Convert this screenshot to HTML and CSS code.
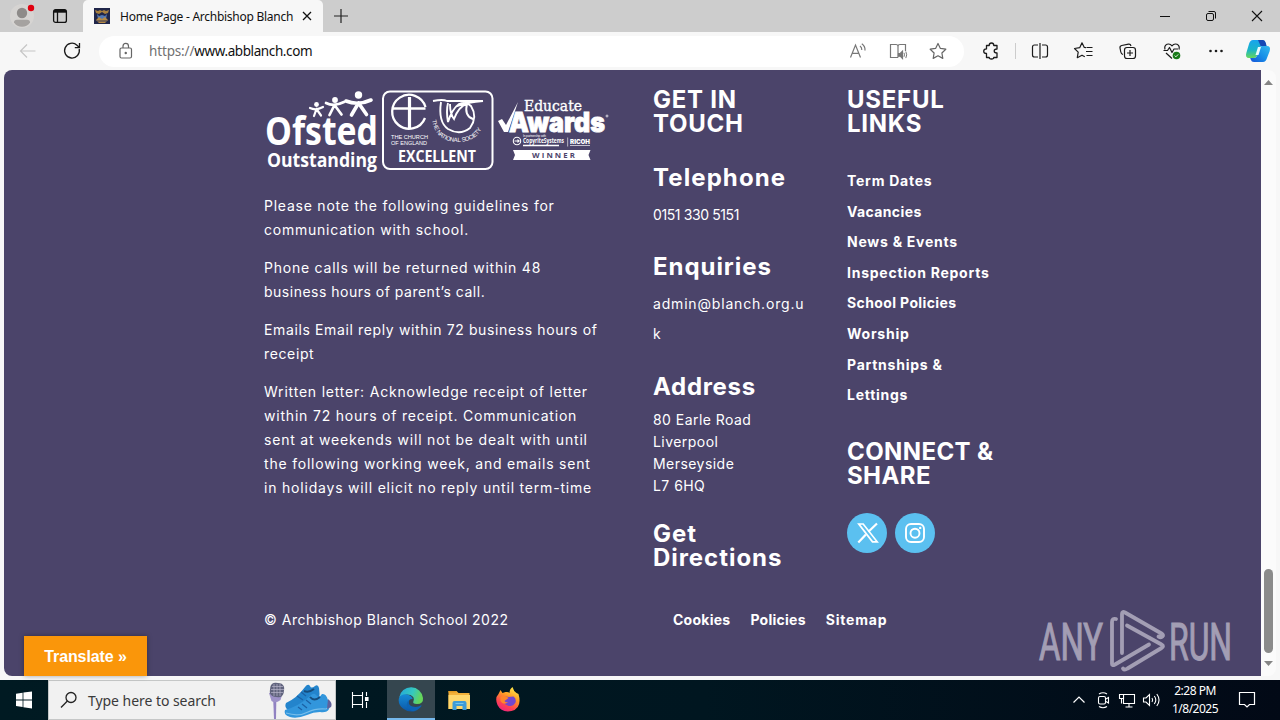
FILE: index.html
```html
<!DOCTYPE html>
<html lang="en">
<head>
<meta charset="utf-8">
<title>Home Page - Archbishop Blanch</title>
<link rel="stylesheet" href="styles.css">
</head>
<body>
<div class="desktop">
  <header class="tabbar">
    <svg class="profile" width="32" height="32" viewBox="0 0 32 32"><circle cx="16" cy="16" r="12" fill="#d6d4d2"/><circle cx="16" cy="13" r="5.2" fill="#8e8b89"/><path d="M8 22.500q0-2.800 3-2.800h10q3 0 3 2.800-3 4.300-8 4.300t-8-4.300" fill="#a5a2a0"/><circle cx="25" cy="8" r="3.200" fill="#e0000f"/></svg>
    <svg class="tabmenu" width="16" height="16" viewBox="0 0 16 16" fill="none" stroke="#111" stroke-width="1.300"><rect x="1.600" y="1.600" width="12.800" height="12.800" rx="2"/><path d="M2 3.300h12" stroke-width="2.800"/><path d="M5.500 4v10"/></svg>
    <div class="tab">
      <svg width="16" height="16" viewBox="0 0 16 16"><path fill="#20264a" d="M0 0h16v16H0z"/><path d="M1 2l3 1 2-1 2 1 2-1 2 1 3-1-1 3-3 1-3-2-3 2-3-1z" fill="#a8803f"/><path d="M3 6l2 2 3-1 3 1 2-2-1 5-4 2-4-2z" fill="#5379b5"/><path d="M2 12l3-3 3 2 3-2 3 3-3 3H5z" fill="#b58a45"/><path d="M3 13h10" stroke="#32375b"/></svg>
      <span class="tab-title">Home Page - Archbishop Blanch</span>
      <svg class="tab-close" width="10" height="10" viewBox="0 0 10 10" stroke="#111" stroke-width="1.300"><path d="M1 1l8 8M9 1L1 9"/></svg>
    </div>
    <svg class="newtab" width="14" height="14" viewBox="0 0 14 14" stroke="#222" stroke-width="1.200"><path d="M7 0v14M0 7h14"/></svg>
    <div class="winbtns">
      <svg width="46" height="32" viewBox="0 0 46 32" stroke="#111"><path d="M18 16.500h10"/></svg>
      <svg width="46" height="32" viewBox="0 0 46 32" stroke="#111" fill="none"><rect x="18.500" y="13.500" width="7" height="7" rx="1.500"/><path d="M20.500 11.500h5.500q1.500 0 1.500 1.500v5.500"/></svg>
      <svg width="46" height="32" viewBox="0 0 46 32" stroke="#111" stroke-width="1.100"><path d="M18 11l10 10M28 11L18 21"/></svg>
    </div>
  </header>

  <div class="toolbar">
    <svg class="slot" viewBox="0 0 44 38" fill="none" stroke="#c6c6c6" stroke-width="1.200"><path d="M29.500 19H15M21 12.500L14.500 19l6.500 6.500"/></svg>
    <svg class="slot" viewBox="0 0 44 38" fill="none" stroke="#1b1b1b" stroke-width="1.300"><path d="M29.200 17a7.400 7.400 0 1 1-2.200-3.800l2.400 2.300M29.500 11v4.700h-4.700"/></svg>
    <div class="omnibox">
      <svg class="lock" width="14" height="18" viewBox="0 0 14 18" fill="none" stroke="#666" stroke-width="1.200"><rect x="1" y="6" width="11.500" height="10" rx="1.500"/><path d="M4 6V4.200q0-2.800 2.750-2.800T9.500 4.200V6"/><circle cx="6.750" cy="11" r=".6" fill="#666"/></svg>
      <span class="url"><span class="scheme">https://</span>www.abblanch.com</span>
      <div class="omni-icons">
        <svg width="40" height="30" viewBox="0 0 40 30" fill="none" stroke="#777" stroke-width="1.200"><path d="M12.500 21.500L17.500 9l5 12.500M14.200 17.300h6.600M22 10q2 1.500 1.800 4M23.800 7.800q3.500 2.400 3.200 6.700"/></svg>
        <svg width="40" height="30" viewBox="0 0 40 30" fill="none" stroke="#777" stroke-width="1.200"><path d="M20 21.500h-7.500v-13H18q2 0 2 2v11M20 10.500q0-2 2-2h5.500v6.500"/><path d="M20.500 17.500h1.700l2.300-2.300v7.300l-2.300-2.300h-1.700z" fill="#777"/><path d="M26 16.800q1 2 0 4M27.800 15.500q1.800 3.300 0 6.600" stroke-width="1"/></svg>
        <svg width="40" height="30" viewBox="0 0 40 30" fill="none" stroke="#666" stroke-width="1.200" stroke-linejoin="round"><path d="M20 7.500l2.400 4.900 5.400.8-3.900 3.800.9 5.400-4.800-2.600-4.800 2.600.9-5.400-3.900-3.800 5.400-.8z"/></svg>
      </div>
    </div>
    <svg class="slot ext" viewBox="0 0 44 38" fill="none" stroke="#1b1b1b" stroke-width="1.300" stroke-linejoin="round"><path d="M17.500 13.500h2.700q0-2.500 2.300-2.500t2.300 2.500h3.200V17q-2.800 0-2.800 2t2.800 2v4.500h-3.200q0 1.500-2.300 1.500t-2.300-1.500h-2.700V21.500q-2.800 0-2.800-2.300t2.800-2.300z"/></svg>
    <span class="sep"></span>
    <svg class="slot" viewBox="0 0 44 38" fill="none" stroke="#1b1b1b" stroke-width="1.200"><path d="M20 13h-3.500q-2 0-2 2v8q0 2 2 2H20M24 13h3.500q2 0 2 2v8q0 2-2 2H24M22 11v16"/></svg>
    <svg class="slot" viewBox="0 0 44 38" fill="none" stroke="#1b1b1b" stroke-width="1.200" stroke-linejoin="round"><path d="M24 15.700l-1.700-.3-2.300-4.600-2.300 4.900-5.200.8 3.700 3.600-.9 5.600 4.700-2.500 2.800 1.500M24.500 15.500h6M24 19.500h6.500M24.500 23.500h6"/></svg>
    <svg class="slot" viewBox="0 0 44 38" fill="none" stroke="#1b1b1b" stroke-width="1.200"><rect x="18.500" y="15.500" width="11" height="11" rx="2.500"/><path d="M24 18v6M21 21h6M17 22.500q-1.800-.5-2.200-2.500l-.8-4q-.3-2 1.700-2.500l6.800-1.300q2-.3 2.500 1.800"/></svg>
    <svg class="slot" viewBox="0 0 44 38" fill="none" stroke="#1b1b1b" stroke-width="1.200" stroke-linejoin="round"><path d="M15 17.500q-1-4 2-5.200 3-1 5 1.500 2-2.500 5-1.500 3 1.200 2 5.200M13.500 18.500h4l2-3 2.500 5 2-3.500h4M16 21l6 5.500"/><circle cx="26.500" cy="23.500" r="3.800" fill="#187a18" stroke="none"/><path d="M24.700 23.600l1.200 1.200 2.300-2.400" stroke="#fff" stroke-width=".9"/></svg>
    <svg class="slot" viewBox="0 0 44 38" fill="#1b1b1b"><circle cx="16.500" cy="19" r="1.300"/><circle cx="22" cy="19" r="1.300"/><circle cx="27.500" cy="19" r="1.300"/></svg>
    <svg class="copilot" width="26" height="26" viewBox="0 0 26 26"><defs><linearGradient id="cpa" x1="0" y1="0" x2="0" y2="1"><stop offset="0" stop-color="#18a4ee"/><stop offset=".55" stop-color="#1ab5c8"/><stop offset="1" stop-color="#67d85a"/></linearGradient><linearGradient id="cpb" x1="1" y1="0" x2="0" y2="1"><stop offset="0" stop-color="#34b9ee"/><stop offset=".5" stop-color="#1790e8"/><stop offset="1" stop-color="#1553d8"/></linearGradient></defs><path d="M8 2h9q2.500 0 3.500 3l.8 3H17q-2 0-2.700 2.500L12 18q-.7 2-3 2H4q-4 0-2.700-5L4 6q1.200-4 4-4z" fill="url(#cpa)"/><path d="M13 2h5q2 0 2.800 3l.8 3h-6z" fill="#1748b5"/><path d="M18 24H9q-2.500 0-3.300-2.500L5.200 20H9q2.300 0 3-2l2.300-7.500Q15 8 17 8h5q4 0 2.700 5L22 20q-1.200 4-4 4z" fill="url(#cpb)"/><path d="M13 9h3l-2.500 8h-3z" fill="#e8fbff"/></svg>
  </div>

  <div class="viewport">
    <main class="footer">
      <section class="about">
        <svg class="logos" width="345" height="84" viewBox="264 90 345 84" fill="#fff">
          <g fill="none" stroke="#fff" stroke-linecap="round">
            <path d="M310 108q6 3 13-1M316.500 109l-2.500 7M316.500 109l4.500 6.500" stroke-width="2.200"/>
            <path d="M326 103q8 4 18-1M334.500 105l-5 10M334.500 105l7 9.500" stroke-width="2.700"/>
            <path d="M346 101q12 5 25-1M358.500 103l-7 12M358.500 103l8 11.500" stroke-width="3.600"/>
          </g>
          <circle cx="316.500" cy="104.500" r="2.400"/><circle cx="335" cy="100" r="2.900"/><circle cx="358.500" cy="95" r="3.700"/>
          <text class="l-open l-bold" x="265" y="145" font-size="39" textLength="113" lengthAdjust="spacingAndGlyphs">Ofsted</text>
          <text class="l-open l-bold" x="267" y="167" font-size="19.500" textLength="110" lengthAdjust="spacingAndGlyphs">Outstanding</text>
          <g fill="none" stroke="#fff">
            <rect x="383" y="91.500" width="109.500" height="77.500" rx="7" stroke-width="2"/>
            <path d="M425.500 107a17 17 0 1 0-.5 11" stroke-width="2.300"/>
            <path d="M393 108.500h32.500" stroke-width="2.500"/><path d="M409.500 97v32" stroke-width="3.200"/>
            <path d="M433 101q10-2 14 0h36q-15 1-26 5M441 102q-3 20 7 27 12 7 22-1 8-11 1-22-5-5-12-2-7 5-11 18-2-11 0-19M450 104q0 10 4 15 5-13 13-15-3 12 6 15" stroke-width="1.900"/>
          </g>
          <text class="l-sans" x="391" y="139" font-size="6.200" textLength="37" lengthAdjust="spacingAndGlyphs">THE CHURCH</text>
          <text class="l-sans" x="391" y="145" font-size="6.200" textLength="36" lengthAdjust="spacingAndGlyphs">OF ENGLAND</text>
          <path id="arc" d="M432 120q4 22 26 22 23 0 27-24" fill="none"/>
          <text class="l-sans" font-size="6"><textPath href="#arc" textLength="66">THE NATIONAL SOCIETY</textPath></text>
          <text class="l-open l-bold" x="398" y="162" font-size="16.500" textLength="78" lengthAdjust="spacingAndGlyphs">EXCELLENT</text>
          <text class="l-slab" x="524" y="111" font-size="14.500" stroke="#fff" stroke-width=".35" textLength="58" lengthAdjust="spacingAndGlyphs">Educate</text>
          <path d="M498 121l4-2 4 6 12-23-10 30h-4z"/>
          <text class="l-black" x="509" y="131.500" font-size="27" stroke="#fff" stroke-width=".8" textLength="96" lengthAdjust="spacingAndGlyphs">Awards</text>
          <circle cx="607" cy="116" r="1" fill="none" stroke="#fff" stroke-width=".7"/>
          <text class="l-sans" x="523" y="137" font-size="3" textLength="23">In partnership with</text>
          <circle cx="517" cy="141" r="3.700" fill="none" stroke="#fff" stroke-width="1.100"/><path d="M514.500 140.400h3v-1.500l2.500 2.100-2.500 2.100v-1.500h-3z"/>
          <text class="l-open l-bold" x="523" y="143" font-size="6.500" textLength="41" lengthAdjust="spacingAndGlyphs">CopyriteSystems</text>
          <path d="M523 144.700h36v1.500h-36zM567.500 137.500h.6v9h-.6z"/>
          <text class="l-black" x="570" y="143.500" font-size="6.500" textLength="20" lengthAdjust="spacingAndGlyphs">RICOH</text>
          <path d="M570 145h20v.9h-20z" opacity=".75"/>
          <path d="M513 150h77.500l-2 5 2 5H513l2-5z"/>
          <text class="l-open l-bold" x="532" y="158" font-size="7.800" textLength="43" fill="#4b446a">WINNER</text>
        </svg>
        <div class="notes">
          <p>Please note the following guidelines for<br>communication with school.</p>
          <p class="n2">Phone calls will be returned within 48<br><span class="snug">business hours of parent’s call.</span></p>
          <p class="n3">Emails Email reply within 72 business hours of<br>receipt</p>
          <p class="n4">Written letter: Acknowledge receipt of letter<br>within 72 hours of receipt. Communication<br>sent at weekends will not be dealt with until<br>the following working week, and emails sent<br>in holidays will elicit no reply until term-time</p>
        </div>
      </section>
      <section class="contact">
        <h2 class="caps">GET IN<br>TOUCH</h2>
        <h2 class="tel">Telephone</h2>
        <p class="phone">0151 330 5151</p>
        <h2 class="enq">Enquiries</h2>
        <p class="email">admin@blanch.org.u<br>k</p>
        <h2 class="addr">Address</h2>
        <address>80 Earle Road<br>Liverpool<br>Merseyside<br>L7 6HQ</address>
        <h2 class="dir">Get<br>Directions</h2>
      </section>
      <section class="links">
        <h2 class="caps">USEFUL<br>LINKS</h2>
        <ul>
          <li>Term Dates</li><li class="snug">Vacancies</li><li>News &amp; Events</li><li>Inspection Reports</li><li class="snug">School Policies</li><li>Worship</li><li>Partnships &amp;<br>Lettings</li>
        </ul>
        <h2 class="caps connect">CONNECT &amp;<br>SHARE</h2>
        <div class="social">
          <svg width="40" height="40" viewBox="0 0 40 40"><circle cx="20" cy="20" r="20" fill="#5bc0f0"/><g fill="none" stroke="#fff" stroke-width="1.700"><path d="M11.800 11h4.400l14 17.800H25.500z"/><path d="M30 10.500l-8.600 8.300M18.900 21.500L11.300 29.500" stroke-width="2.200"/></g></svg>
          <svg width="40" height="40" viewBox="0 0 40 40"><circle cx="20" cy="20" r="20" fill="#5bc0f0"/><g fill="none" stroke="#fff" stroke-width="1.900"><rect x="11" y="11" width="18" height="18" rx="5"/><circle cx="20" cy="20.200" r="4.500"/></g><circle cx="25.200" cy="14.900" r="1.200" fill="#fff"/></svg>
        </div>
      </section>
      <div class="legal">
        <span class="copy">© Archbishop Blanch School 2022</span>
        <nav><span>Cookies</span><span>Policies</span><span class="wide">Sitemap</span></nav>
      </div>
      <div class="translate">Translate »</div>
      <svg class="watermark" width="204" height="66" viewBox="0 0 204 66">
        <g fill="#a39eb4" stroke="#a39eb4" stroke-width=".8"><text class="l-wm" transform="translate(3 51.500) scale(1 1.420)" font-size="36" textLength="64" lengthAdjust="spacingAndGlyphs">ANY</text><text class="l-wm" transform="translate(133 51.500) scale(1 1.420)" font-size="36" textLength="63" lengthAdjust="spacingAndGlyphs">RUN</text></g>
        <g fill="none" stroke="#a39eb4" stroke-width="3.800" stroke-linejoin="round" stroke-linecap="round"><path d="M86 45V6q0-3 3-1.500l36.500 21q2.500 1.500 1 3-1.500 1.500-4 0"/><path d="M80 11q-4-1-4 3v42q0 2 3 .5l34-20"/><path d="M91 17.500L125.500 36.500q3 1.500 0 3.500L91.500 60.500q-3 2-4.500 0"/></g>
      </svg>
    </main>
    <div class="scrollbar">
      <svg width="9" height="5" viewBox="0 0 9 5"><path d="M0 5L4.500 0 9 5z" fill="#858585"/></svg>
      <div class="thumb"></div>
      <svg width="9" height="5" viewBox="0 0 9 5"><path d="M0 0l4.500 5L9 0z" fill="#858585"/></svg>
    </div>
  </div>

  <footer class="taskbar">
    <svg width="48" height="40" viewBox="0 0 48 40" fill="#fff"><path d="M16 13.700l6.600-1v6.800H16zM23.400 12.500L32 11.500v8h-8.600zM16 20.500h6.600v6.600l-6.600-1zM23.400 20.500H32V28.500l-8.600-1.200z"/></svg>
    <div class="search">
      <svg width="18" height="18" viewBox="0 0 18 18" fill="none" stroke="#222" stroke-width="1.300"><circle cx="11" cy="6.500" r="5"/><path d="M7.400 10L1 16.500"/></svg>
      <span>Type here to search</span>
      <svg class="art" width="68" height="38" viewBox="0 0 68 38"><path d="M6.300 20.500h3L9 38H7z" fill="#9182c2"/><path d="M2 12l14-1-2.500 8q-5 4-9 1z" fill="#9d91c8"/><rect x="3" y="2" width="14" height="14" rx="5" fill="#61647e" transform="rotate(7 10 9)"/><path d="M5 5.500h11M4 8.500h13M4 11.500h12M7 3v12M10 3v12M13 3v12" stroke="#b7b5ca" stroke-width=".7"/><path d="M19 22q11-5 19-16 3-4 5-1 1 3 5 0 3-2 4 2 1 6 0 10L37 27q-9 6-16 2-4-3-2-7z" fill="#2384cc"/><path d="M18 29q14-4 25-14 4-4 6-1 3 4 6-1 4-1 6 6 3 6 1 9-2 4-9 3-7 0-13 3-10 4-17 2-7-2-5-7z" fill="#3296dc"/><path d="M37 10q5 2 10-2M43 16q4 5 10 0" fill="none" stroke="#164d7d" stroke-width="2"/><path d="M30 15l6 4M34 11l5 4M35 23l5 4M39 19l5 4M31 26l4 3" stroke="#1b62a6" stroke-width="1.300"/><path d="M19 32q13 4 22-1 8-4 18-3l5-3" fill="none" stroke="#77bdea" stroke-width="1.200"/><path d="M61 18q5 4 3 8l-4 2z" fill="#60619a"/></svg>
    </div>
    <svg class="tview" width="48" height="40" viewBox="0 0 48 40" fill="none" stroke="#fff" stroke-width="1.100"><path d="M16.500 12v3.500h10V12M16.500 28v-3.500h10V28M16.500 15.500v9M26.500 15.500v9M30.500 12v4M30.500 22v6"/><path d="M29.500 17.500h2.500v3h-2.500z" fill="#fff"/></svg>
    <div class="app active">
      <svg width="26" height="26" viewBox="0 0 26 26"><defs><linearGradient id="eg" x1="0" y1="0" x2="1" y2=".3"><stop offset="0" stop-color="#23a5dc"/><stop offset=".6" stop-color="#35c8c0"/><stop offset="1" stop-color="#65d65a"/></linearGradient><linearGradient id="eb" x1="0" y1="0" x2="0" y2="1"><stop offset="0" stop-color="#168bd6"/><stop offset="1" stop-color="#0b57a8"/></linearGradient></defs><path d="M1.200 11.500A12 12 0 0 1 25 12q.5 6-6 6-5 0-3.500-3 1.500-4-3-6-6-2-11.300 2.500z" fill="url(#eg)"/><path d="M1 12Q3.500 7.500 9 8.500q5 1 5.700 4.500-4-.5-4.200 4 .5 6 7 8-7 2-12.500-2.500T1 12z" fill="url(#eb)"/><path d="M10.600 14q-.7 7 7 7 3 0 5.500-1.700.8 0 .2 1-5 6.500-10.300 4.200Q6 20 10.600 14z" fill="#0d63b4"/></svg>
    </div>
    <svg class="app" viewBox="0 0 48 40"><path d="M13 11h8l2 2h11v16H13z" fill="#f3b13a"/><path d="M13 15h21.500v14H13z" fill="#ffd76d"/><path d="M13 11h7l1 1.500h-8z" fill="#e59b22"/><path d="M17 30v-7q0-2 2-2h10q2 0 2 2v7h-4v-4h-6v4z" fill="#3e9bd7"/><path d="M20 23.500h8" stroke="#73c4ef"/></svg>
    <svg class="app" viewBox="0 0 48 40"><defs><linearGradient id="fx" x1=".8" y1="0" x2=".3" y2="1"><stop offset="0" stop-color="#fff04d"/><stop offset=".4" stop-color="#ff9b25"/><stop offset=".75" stop-color="#ff4251"/><stop offset="1" stop-color="#ee237e"/></linearGradient></defs><path d="M14 14l2-4 2 3 3-1q3-.5 4 1 0-4 3-6 1 4 4 6l2 1q4 14-7 17-10 2-14-6-3-7 1-11z" fill="url(#fx)"/><path d="M20 16l4 1 5-.5q3 2 2 6-3 5-8 3-5-2-4-6l3-.5z" fill="#7347cf"/><path d="M16 17q4-3 8 1l-4 3q1 2 4 1-5 4-8-1z" fill="#ff862b"/></svg>
    <div class="tray">
      <svg width="24" height="40" viewBox="0 0 24 40" fill="none" stroke="#fff" stroke-width="1.200"><path d="M6.500 22.500L12 17l5.500 5.500"/></svg>
      <svg width="24" height="40" viewBox="0 0 24 40" fill="none" stroke="#fff" stroke-width="1.100"><rect x="7.500" y="16.500" width="7" height="7.500" rx="1.500"/><path d="M15 19l2.500-1.500v5.500L15 21.500M8 14q4-2.500 8 0M8 26.500q4 2.500 8 0"/></svg>
      <svg width="24" height="40" viewBox="0 0 24 40" fill="none" stroke="#fff" stroke-width="1.100"><path d="M8.500 14.500h11v9h-11zM14 24v3M10.500 27h7"/><path d="M4.500 14.500h4v4h-4zM6.500 18.500v5" fill="#020c18"/></svg>
      <svg width="24" height="40" viewBox="0 0 24 40" fill="none" stroke="#fff" stroke-width="1.100"><path d="M4.500 18h2.500l3.500-3.500v11L7 22H4.500zM13 18q1.300 2 0 4M15.300 16q3 4 0 8M17.800 14q4.500 6 0 12"/></svg>
      <div class="clock"><span>2:28 PM</span><span class="date">1/8/2025</span></div>
      <svg class="notif" width="24" height="40" viewBox="0 0 24 40" fill="none" stroke="#fff" stroke-width="1.200"><path d="M4.500 12.500h15v12h-5L12 27l-2.500-2.500h-5z"/></svg>
    </div>
  </footer>
</div>
</body>
</html>
```

FILE: styles.css
```css
* { box-sizing: border-box; }
body { margin: 0; overflow: hidden; }
svg { display: block; flex: none; }
h2, p, ul { margin: 0; padding: 0; }
.desktop { width: 1280px; height: 720px; display: flex; flex-direction: column; background: #f7f7f7; font-family: "Noto Sans", "Liberation Sans", sans-serif; }

.tabbar { height: 32px; flex: none; display: flex; align-items: center; background: #cdcdcd; }
.profile { margin-left: 6px; }
.tabmenu { margin-left: 14px; }
.tab { margin-left: 15px; width: 240px; height: 32px; padding-left: 11px; display: flex; align-items: center; background: #f7f7f7; border-radius: 5px 5px 0 0; }
.tab-title { margin-left: 10px; width: 182px; font-size: 12px; white-space: nowrap; color: #111; letter-spacing: -.26px; }
.newtab { margin-left: 11px; }
.winbtns { margin-left: auto; display: flex; }

.toolbar { height: 38px; flex: none; display: flex; align-items: center; padding-left: 6px; background: #f7f7f7; }
.slot { width: 44px; height: 38px; }
.omnibox { margin-left: 5px; width: 865px; height: 31px; display: flex; align-items: center; padding-left: 20px; border-radius: 16px; background: #fff; }
.url { margin-left: 16px; font-size: 13.5px; line-height: 20px; color: #111; white-space: nowrap; letter-spacing: -.4px; }
.scheme { color: #717171; letter-spacing: -.15px; }
.omni-icons { margin-left: auto; margin-right: 6px; display: flex; }
.ext { margin-left: 5px; }
.sep { width: 1px; height: 16px; margin: 0 2px; background: #ccc; }
.copilot { margin-left: 7px; }

.viewport { height: 610px; flex: none; display: flex; padding: 0 4px 4px; }
.footer { position: relative; width: 1257px; height: 606px; display: grid; grid-template-columns: 345px 194px 194px; grid-template-rows: 512px 94px; padding-left: 260px; background: #4b446a; border-radius: 8px 0 0 8px; color: #fff; font-family: Inter, "Noto Sans", sans-serif; font-size: 14px; }
.about { padding-top: 20px; }
.notes { margin-top: 20px; display: grid; gap: 14px; line-height: 24px; letter-spacing: .77px; white-space: nowrap; }
.notes .snug { letter-spacing: .5px; }
.n3 { letter-spacing: .63px; }
.n4 { letter-spacing: .8px; }
.contact { margin-left: 44px; padding-top: 18px; white-space: nowrap; }
.links { margin-left: 44px; padding-top: 18px; white-space: nowrap; }
h2 { font-size: 24px; line-height: 24px; font-weight: 700; letter-spacing: .95px; }
.caps { letter-spacing: .75px; }
.connect { margin-top: 29px; letter-spacing: .4px; }
.tel { margin-top: 30px; letter-spacing: 1.1px; }
.phone { margin-top: 10px; line-height: 30.6px; letter-spacing: -.4px; }
.enq { margin-top: 24px; }
.email { margin-top: 10px; line-height: 30.6px; letter-spacing: .82px; }
.addr { margin-top: 25px; letter-spacing: .7px; }
address { margin-top: 10px; font-style: normal; line-height: 22px; letter-spacing: .45px; }
.dir { margin-top: 25px; }
ul { margin-top: 30px; list-style: none; font-weight: 700; line-height: 30.6px; letter-spacing: .75px; }
ul .snug { letter-spacing: .38px; }
.social { margin-top: 25px; display: flex; gap: 8px; }
.legal { grid-column: 1 / -1; display: flex; padding-top: 26px; line-height: 24px; white-space: nowrap; letter-spacing: .5px; }
.copy { width: 409px; }
.legal nav { display: flex; gap: 20px; font-weight: 700; letter-spacing: .25px; }
.legal .wide { letter-spacing: .8px; }
.translate { position: absolute; left: 20px; bottom: 0; width: 123px; height: 40px; line-height: 41px; text-align: center; background: #fa960a; box-shadow: 0 0 5px rgba(0,0,0,.35); font-family: "Liberation Sans", sans-serif; font-weight: 700; font-size: 16px; letter-spacing: -.1px; }
.watermark { position: absolute; left: 1032px; top: 538px; }

.l-open { font-family: "Open Sans", sans-serif; font-weight: 600; }
.l-bold { font-weight: 700; }
.l-sans { font-family: "Liberation Sans", sans-serif; }
.l-slab { font-family: "DejaVu Serif", serif; }
.l-black { font-family: Inter, sans-serif; font-weight: 900; }
.l-wm { font-family: Roboto, sans-serif; }

.scrollbar { width: 15px; height: 606px; display: flex; flex-direction: column; align-items: center; padding: 10px 0; background: #fbfbfb; border-radius: 0 8px 8px 0; }
.thumb { width: 9px; height: 84px; margin-top: auto; margin-bottom: 8px; border-radius: 5px; background: #8b8b8b; }

.taskbar { height: 40px; flex: none; display: flex; color: #fff; background: linear-gradient(90deg, #001a22, #001620 55%, #020916); }
.search { width: 288px; height: 40px; display: flex; align-items: center; padding-left: 11px; border: 1px solid #c5c7c7; background: #f1f1f1; color: #3a3a3a; font-size: 14px; }
.search span { margin-left: 10px; width: 180px; white-space: nowrap; letter-spacing: -.05px; }
.app { width: 49px; height: 40px; }
.active { width: 48px; margin-left: 3px; display: flex; justify-content: center; align-items: center; background: #35464f; border-bottom: 2px solid #76b9ed; }
.tray { margin-left: auto; display: flex; width: 213px; }
.clock { width: 64px; display: flex; flex-direction: column; align-items: center; font-size: 12px; line-height: 18px; padding-top: 2px; white-space: nowrap; letter-spacing: -.5px; }
.notif { margin-left: 8px; }
```
